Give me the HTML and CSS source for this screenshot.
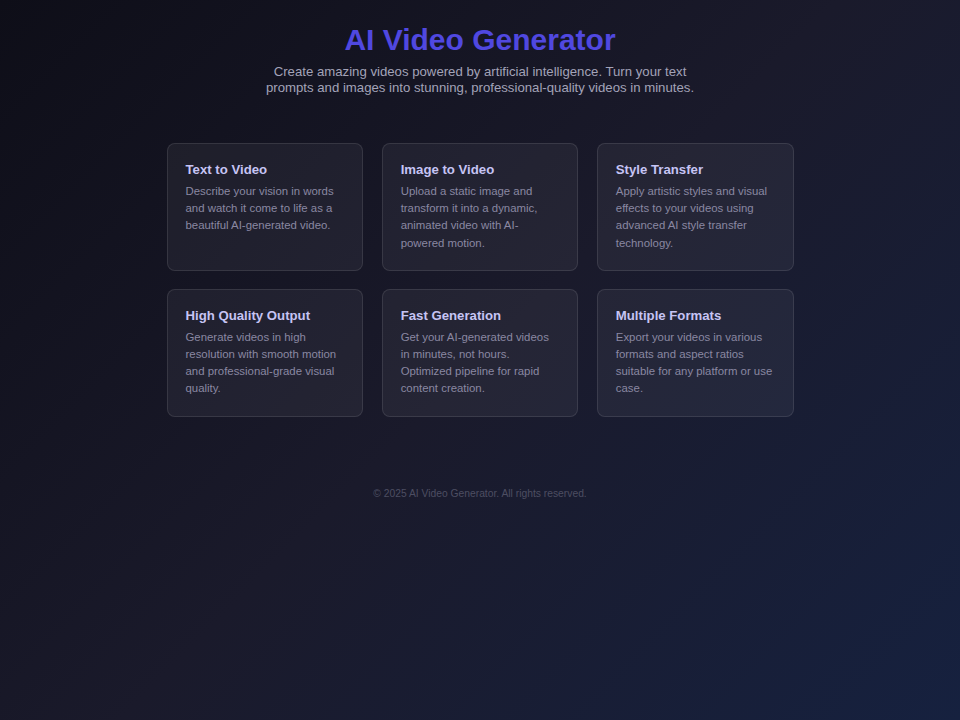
FILE: index.html
```html
<!DOCTYPE html>
<html lang="en">
<head>
<meta charset="utf-8">
<title>AI Video Generator</title>
<link rel="stylesheet" href="styles.css">
</head>
<body>
<div class="page">
  <header class="hero">
    <h1 class="title">AI Video Generator</h1>
    <p class="subtitle">Create amazing videos powered by artificial intelligence. Turn your text prompts and images into stunning, professional-quality videos in minutes.</p>
  </header>
  <main class="grid">
    <div class="card"><h3 class="card-title">Text to Video</h3><p class="card-text">Describe your vision in words and watch it come to life as a beautiful AI-generated video.</p></div>
    <div class="card"><h3 class="card-title">Image to Video</h3><p class="card-text">Upload a static image and transform it into a dynamic, animated video with AI-powered motion.</p></div>
    <div class="card"><h3 class="card-title">Style Transfer</h3><p class="card-text">Apply artistic styles and visual effects to your videos using advanced AI style transfer technology.</p></div>
    <div class="card"><h3 class="card-title">High Quality Output</h3><p class="card-text">Generate videos in high resolution with smooth motion and professional-grade visual quality.</p></div>
    <div class="card"><h3 class="card-title">Fast Generation</h3><p class="card-text">Get your AI-generated videos in minutes, not hours. Optimized pipeline for rapid content creation.</p></div>
    <div class="card"><h3 class="card-title">Multiple Formats</h3><p class="card-text">Export your videos in various formats and aspect ratios suitable for any platform or use case.</p></div>
  </main>
  <footer class="footer">© 2025 AI Video Generator. All rights reserved.</footer>
</div>
</body>
</html>
```
FILE: styles.css
```css
html, body {
  margin: 0;
  padding: 0;
  height: 100%;
}
body {
  font-family: "Liberation Sans", Arial, sans-serif;
  background: linear-gradient(135deg, #0e0e18 0%, #1a1a2b 50%, #16213f 100%);
  min-height: 720px;
  color: #9ca3af;
}
.page {
  display: flex;
  flex-direction: column;
  align-items: center;
  padding-top: 22px;
}
.hero {
  text-align: center;
}
.title {
  margin: 0;
  font-size: 30px;
  font-weight: 700;
  line-height: 36px;
  color: #5048e0;
}
.subtitle {
  margin: 6px auto 0;
  width: 448px;
  font-size: 13.2px;
  line-height: 16px;
  color: #a3a3b8;
}
.grid {
  margin-top: 47px;
  width: 627px;
  display: grid;
  grid-template-columns: repeat(3, 1fr);
  column-gap: 18.5px;
  row-gap: 18px;
}
.card {
  background: rgba(255, 255, 255, 0.05);
  border: 1px solid rgba(255, 255, 255, 0.1);
  border-radius: 8px;
  padding: 18px 18px 18px 18px;
}
.card-title {
  margin: 0;
  font-size: 13.2px;
  font-weight: 700;
  line-height: 16px;
  color: #c6c4f4;
}
.card-text {
  margin: 5px 0 0;
  font-size: 11.4px;
  line-height: 17.2px;
  color: #8a88a2;
}
.footer {
  margin-top: 71px;
  font-size: 10.3px;
  color: #4d4e62;
}
```
